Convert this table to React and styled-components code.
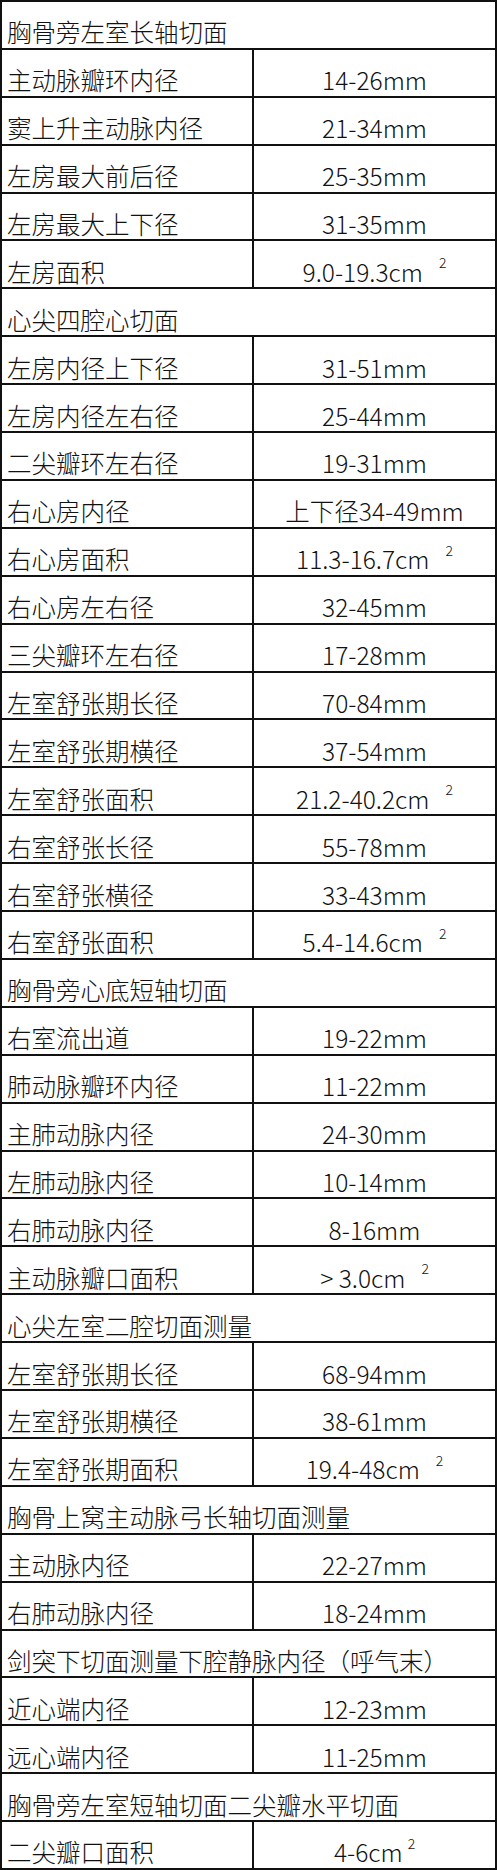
import React from 'react';
import styled, { createGlobalStyle } from 'styled-components';

const GlobalStyle = createGlobalStyle`
  html, body {
    margin: 0;
    padding: 0;
    background: #fff;
  }
  body {
    font-family: "Noto Sans CJK SC", "Noto Sans", sans-serif;
    font-weight: 300;
    color: #111;
  }
`;

const Table = styled.div`
  width: 497px;
  height: 1870px;
  box-sizing: border-box;
  border: 2px solid #111;
  border-bottom: none;
  display: grid;
  grid-template-rows: repeat(39, 1fr);
`;

const Row = styled.div`
  display: grid;
  grid-template-columns: ${p => (p.$section ? '1fr' : '250px 1fr')};
  border-bottom: 2px solid #111;
  min-height: 0;
`;

const Cell = styled.div`
  display: flex;
  align-items: flex-end;
  justify-content: ${p => (p.$center ? 'center' : 'flex-start')};
  padding: 0 0 3px ${p => (p.$center ? '0' : '5px')};
  border-left: ${p => (p.$divider ? '2px solid #111' : 'none')};
  font-size: 24.5px;
  line-height: 24.5px;
  white-space: nowrap;
  overflow: hidden;
`;

const Sup = styled.span`
  font-size: 14px;
  line-height: 14px;
  align-self: flex-end;
  margin-left: ${p => (p.$tight ? '5px' : '16px')};
  margin-bottom: 15px;
`;

const rows = [
  { section: '胸骨旁左室长轴切面' },
  { name: '主动脉瓣环内径', value: '14-26mm' },
  { name: '窦上升主动脉内径', value: '21-34mm' },
  { name: '左房最大前后径', value: '25-35mm' },
  { name: '左房最大上下径', value: '31-35mm' },
  { name: '左房面积', value: '9.0-19.3cm', sup: true },
  { section: '心尖四腔心切面' },
  { name: '左房内径上下径', value: '31-51mm' },
  { name: '左房内径左右径', value: '25-44mm' },
  { name: '二尖瓣环左右径', value: '19-31mm' },
  { name: '右心房内径', value: '上下径34-49mm' },
  { name: '右心房面积', value: '11.3-16.7cm', sup: true },
  { name: '右心房左右径', value: '32-45mm' },
  { name: '三尖瓣环左右径', value: '17-28mm' },
  { name: '左室舒张期长径', value: '70-84mm' },
  { name: '左室舒张期横径', value: '37-54mm' },
  { name: '左室舒张面积', value: '21.2-40.2cm', sup: true },
  { name: '右室舒张长径', value: '55-78mm' },
  { name: '右室舒张横径', value: '33-43mm' },
  { name: '右室舒张面积', value: '5.4-14.6cm', sup: true },
  { section: '胸骨旁心底短轴切面' },
  { name: '右室流出道', value: '19-22mm' },
  { name: '肺动脉瓣环内径', value: '11-22mm' },
  { name: '主肺动脉内径', value: '24-30mm' },
  { name: '左肺动脉内径', value: '10-14mm' },
  { name: '右肺动脉内径', value: '8-16mm' },
  { name: '主动脉瓣口面积', value: '> 3.0cm', sup: true },
  { section: '心尖左室二腔切面测量' },
  { name: '左室舒张期长径', value: '68-94mm' },
  { name: '左室舒张期横径', value: '38-61mm' },
  { name: '左室舒张期面积', value: '19.4-48cm', sup: true },
  { section: '胸骨上窝主动脉弓长轴切面测量' },
  { name: '主动脉内径', value: '22-27mm' },
  { name: '右肺动脉内径', value: '18-24mm' },
  { section: '剑突下切面测量下腔静脉内径（呼气末）' },
  { name: '近心端内径', value: '12-23mm' },
  { name: '远心端内径', value: '11-25mm' },
  { section: '胸骨旁左室短轴切面二尖瓣水平切面' },
  { name: '二尖瓣口面积', value: '4-6cm', sup: true, tight: true },
];

export default function App() {
  return (
    <>
      <GlobalStyle />
      <Table>
        {rows.map((r, i) =>
          r.section ? (
            <Row key={i} $section>
              <Cell>{r.section}</Cell>
            </Row>
          ) : (
            <Row key={i}>
              <Cell>{r.name}</Cell>
              <Cell $center $divider>
                <span>{r.value}</span>
                {r.sup && <Sup $tight={r.tight}>2</Sup>}
              </Cell>
            </Row>
          )
        )}
      </Table>
    </>
  );
}
